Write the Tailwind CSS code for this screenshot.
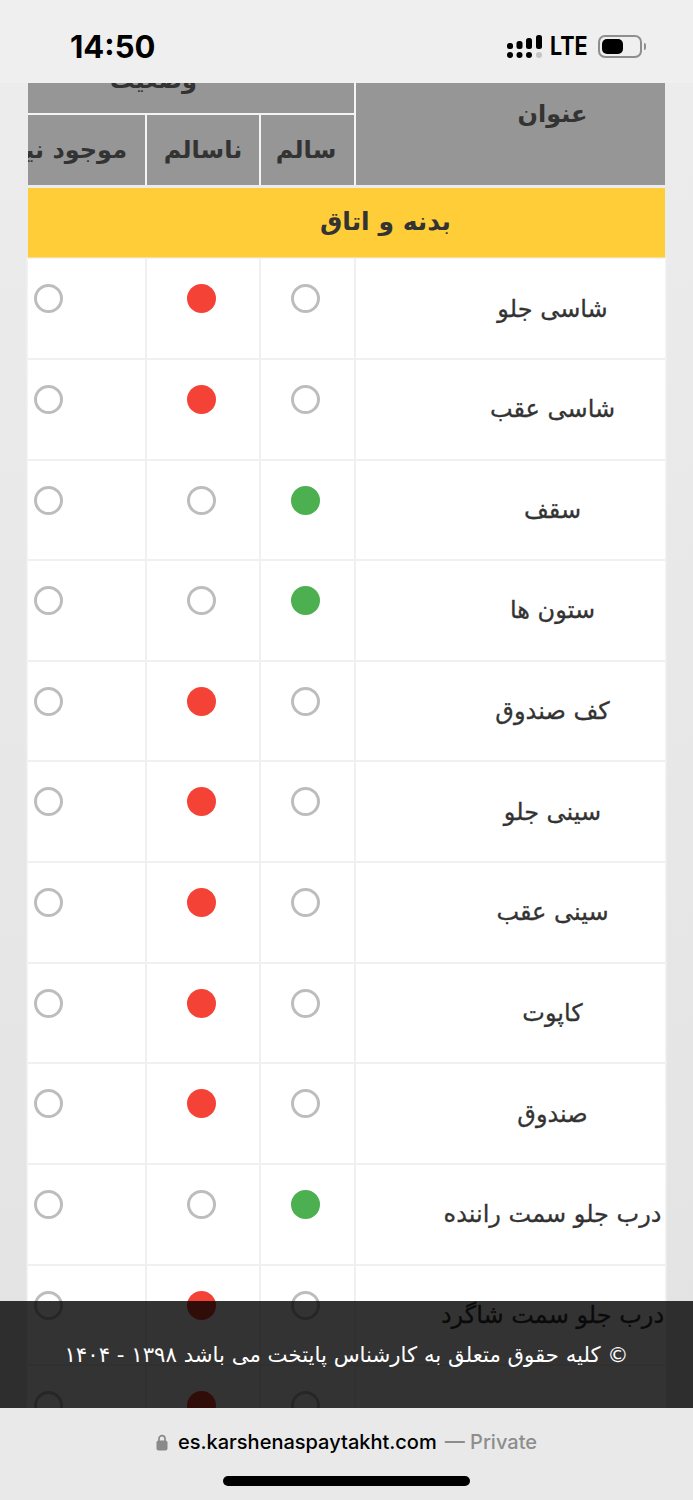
<!DOCTYPE html>
<html lang="fa">
<head>
  <meta charset="UTF-8" />
  <meta name="viewport" content="width=device-width, initial-scale=1" />
  <title>Karshenas Paytakht</title>
  <script src="https://cdn.jsdelivr.net/npm/@tailwindcss/browser@4"></script>
</head>
<body class="bg-[#e9e9e9]">
  <div class="w-[693px] h-[1500px] flex flex-col overflow-hidden font-['DejaVu_Sans',sans-serif]">

    <!-- status bar -->
    <div class="h-[83px] shrink-0 bg-[#efefef] flex items-center justify-between pl-[70px] pr-[47px] pt-[10px]">
      <span class="font-['Inter',sans-serif] font-bold text-[31px] leading-none text-black">14:50</span>
      <div class="flex items-center">
        <svg width="37" height="26" viewBox="0 0 37 26" class="mr-[6px]">
          <g fill="#000">
            <rect x="0" y="9" width="6" height="6" rx="2.5"/>
            <rect x="9.5" y="7" width="6" height="8" rx="2.5"/>
            <rect x="19" y="4" width="6" height="11" rx="2.5"/>
            <rect x="29" y="1" width="6" height="14" rx="2.5"/>
            <circle cx="3" cy="21" r="3"/>
            <circle cx="12.5" cy="21" r="3"/>
            <circle cx="22" cy="21" r="3"/>
          </g>
          <circle cx="32" cy="21" r="3" fill="#c4c4c4"/>
        </svg>
        <span class="font-['Inter',sans-serif] font-bold text-[25px] leading-none text-black w-[48px] scale-x-[0.86] origin-left">LTE</span>
        <div class="w-[44px] h-[23px] rounded-[7px] border-2 border-[#8e8e8e] p-[2px]">
          <div class="w-[21px] h-full rounded-[5px] bg-black"></div>
        </div>
        <div class="ml-[2px] w-[2px] h-[7px] rounded-r bg-[#8e8e8e]"></div>
      </div>
    </div>

    <!-- page -->
    <div class="relative flex-1 overflow-hidden px-[28px] bg-gradient-to-b from-[#ececec] to-[#e3e3e3]">
      <div class="grid grid-cols-[117px_112px_93px_309px] grid-rows-[30px_70px] gap-[2px] bg-[#f4f4f4] text-[#333] font-bold text-[24px]">
        <div class="col-span-3 bg-[#969696] overflow-hidden flex justify-start items-end pb-[21px] pl-[82px]" dir="ltr">
          <span class="leading-none" dir="rtl">وضعیت</span>
        </div>
        <div class="row-span-2 bg-[#969696] flex items-center justify-center pl-[84px] pb-[40px]" dir="rtl">عنوان</div>
        <div class="bg-[#969696] overflow-hidden whitespace-nowrap pr-[18px] flex items-center" dir="rtl">موجود نیست</div>
        <div class="bg-[#969696] flex items-center justify-center" dir="rtl">ناسالم</div>
        <div class="bg-[#969696] flex items-center justify-center pr-[3px]" dir="rtl">سالم</div>
      </div>
      <div class="mt-[2.5px] h-[70px] bg-[#ffcd38] flex items-center justify-center pl-[78px] pb-[2px] text-[#333] font-bold text-[25px]" dir="rtl">بدنه و اتاق</div>
      <div id="rows" class="mt-[1.7px] flex flex-col gap-[2px] bg-[#f0f0f0] shadow-[0_0_0_1.5px_#f3f3f3]"></div>

      <!-- footer overlay -->
      <div class="absolute left-0 right-0 bottom-0 h-[107px] bg-black/80 flex items-center justify-center">
        <p class="text-white text-[21.25px] leading-none whitespace-nowrap" dir="rtl">© کلیه حقوق متعلق به کارشناس پایتخت می باشد ۱۳۹۸ - ۱۴۰۴</p>
      </div>
    </div>

    <!-- browser bar -->
    <div class="relative z-10 h-[92px] shrink-0 bg-[#e9e9e9] flex flex-col items-center">
      <div class="mt-[24px] flex items-center font-['Inter',sans-serif] font-medium text-[20px] leading-none">
        <svg width="12" height="17" viewBox="0 0 12 17" class="mr-[10px]">
          <path d="M3 7V4.6a3 3 0 0 1 6 0V7" fill="none" stroke="#8a8a8a" stroke-width="1.7"/>
          <rect x="0.5" y="6.5" width="11" height="10" rx="2" fill="#8a8a8a"/>
        </svg>
        <span class="text-black">es.karshenaspaytakht.com</span>
        <span class="ml-[8px] text-[#8d8d8d]">— Private</span>
      </div>
      <div class="mt-[24px] w-[247px] h-[10px] rounded-full bg-black"></div>
    </div>
  </div>

  <script>
    const rows = [
      ['شاسی جلو', 'bad'],
      ['شاسی عقب', 'bad'],
      ['سقف', 'ok'],
      ['ستون ها', 'ok'],
      ['کف صندوق', 'bad'],
      ['سینی جلو', 'bad'],
      ['سینی عقب', 'bad'],
      ['کاپوت', 'bad'],
      ['صندوق', 'bad'],
      ['درب جلو سمت راننده', 'ok'],
      ['درب جلو سمت شاگرد', 'bad'],
      ['', 'bad'],
    ];

    const empty = '<span class="block w-[29px] h-[29px] rounded-full border-[3px] border-[#bdbdbd]"></span>';
    const red = '<span class="block w-[29px] h-[29px] rounded-full bg-[#f44336]"></span>';
    const green = '<span class="block w-[29px] h-[29px] rounded-full bg-[#4caf50]"></span>';

    document.getElementById('rows').innerHTML = rows.map(([title, state]) => `
      <div class="grid grid-cols-[117px_112px_93px_309px] gap-[2px] h-[98.67px]">
        <div class="bg-white pl-[6px] pt-[25px]">${empty}</div>
        <div class="bg-white pl-[40px] pt-[25px]">${state === 'bad' ? red : empty}</div>
        <div class="bg-white pl-[30px] pt-[25px]">${state === 'ok' ? green : empty}</div>
        <div class="bg-white flex items-center justify-center pl-[84px] whitespace-nowrap text-[24px] text-[#333] [-webkit-text-stroke:0.3px_#333]" dir="rtl">${title}</div>
      </div>`).join('');
  </script>
</body>
</html>
